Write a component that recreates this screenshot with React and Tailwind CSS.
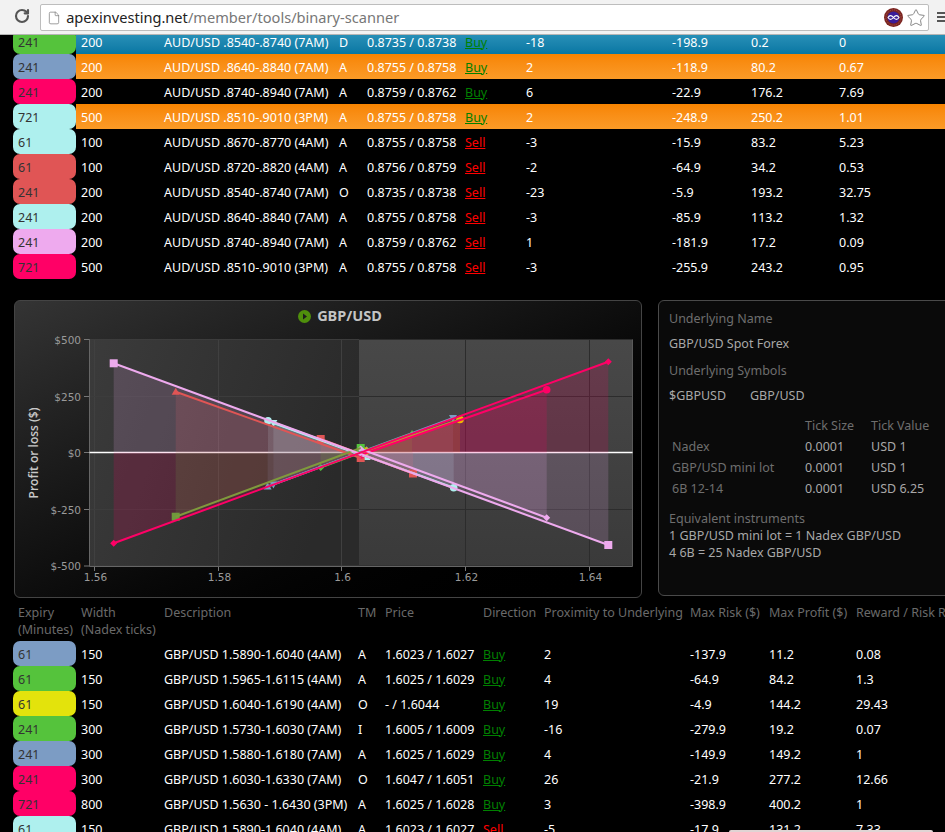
import React from 'react';
import { RotateCw, File, Star } from 'lucide-react';

const GREEN = 'bg-[#55c33c]';
const BLUE = 'bg-[#7c9cc4]';
const PINK = 'bg-[#ff0066]';
const CYAN = 'bg-[#aef0ee]';
const RED = 'bg-[#e05555]';
const LILAC = 'bg-[#eeaaee]';
const YELLOW = 'bg-[#e3e30c]';

const TOP_COLS = 'grid-cols-[83px_175px_28px_98px_61px_146px_79px_88px_1fr]';
const BOTTOM_COLS = 'grid-cols-[83px_194px_27px_98px_61px_146px_79px_87px_1fr]';

const topRows = [
    [GREEN, '241', '200', 'AUD/USD .8540-.8740 (7AM)', 'D', '0.8735 / 0.8738', 'Buy', '-18', '-198.9', '0.2', '0', 'blue'],
    [BLUE, '241', '200', 'AUD/USD .8640-.8840 (7AM)', 'A', '0.8755 / 0.8758', 'Buy', '2', '-118.9', '80.2', '0.67', 'orange'],
    [PINK, '241', '200', 'AUD/USD .8740-.8940 (7AM)', 'A', '0.8759 / 0.8762', 'Buy', '6', '-22.9', '176.2', '7.69', ''],
    [CYAN, '721', '500', 'AUD/USD .8510-.9010 (3PM)', 'A', '0.8755 / 0.8758', 'Buy', '2', '-248.9', '250.2', '1.01', 'orange'],
    [CYAN, '61', '100', 'AUD/USD .8670-.8770 (4AM)', 'A', '0.8755 / 0.8758', 'Sell', '-3', '-15.9', '83.2', '5.23', ''],
    [RED, '61', '100', 'AUD/USD .8720-.8820 (4AM)', 'A', '0.8756 / 0.8759', 'Sell', '-2', '-64.9', '34.2', '0.53', ''],
    [RED, '241', '200', 'AUD/USD .8540-.8740 (7AM)', 'O', '0.8735 / 0.8738', 'Sell', '-23', '-5.9', '193.2', '32.75', ''],
    [CYAN, '241', '200', 'AUD/USD .8640-.8840 (7AM)', 'A', '0.8755 / 0.8758', 'Sell', '-3', '-85.9', '113.2', '1.32', ''],
    [LILAC, '241', '200', 'AUD/USD .8740-.8940 (7AM)', 'A', '0.8759 / 0.8762', 'Sell', '1', '-181.9', '17.2', '0.09', ''],
    [PINK, '721', '500', 'AUD/USD .8510-.9010 (3PM)', 'A', '0.8755 / 0.8758', 'Sell', '-3', '-255.9', '243.2', '0.95', ''],
];

const bottomRows = [
    [BLUE, '61', '150', 'GBP/USD 1.5890-1.6040 (4AM)', 'A', '1.6023 / 1.6027', 'Buy', '2', '-137.9', '11.2', '0.08', ''],
    [GREEN, '61', '150', 'GBP/USD 1.5965-1.6115 (4AM)', 'A', '1.6025 / 1.6029', 'Buy', '4', '-64.9', '84.2', '1.3', ''],
    [YELLOW, '61', '150', 'GBP/USD 1.6040-1.6190 (4AM)', 'O', '- / 1.6044', 'Buy', '19', '-4.9', '144.2', '29.43', ''],
    [GREEN, '241', '300', 'GBP/USD 1.5730-1.6030 (7AM)', 'I', '1.6005 / 1.6009', 'Buy', '-16', '-279.9', '19.2', '0.07', ''],
    [BLUE, '241', '300', 'GBP/USD 1.5880-1.6180 (7AM)', 'A', '1.6025 / 1.6029', 'Buy', '4', '-149.9', '149.2', '1', ''],
    [PINK, '241', '300', 'GBP/USD 1.6030-1.6330 (7AM)', 'O', '1.6047 / 1.6051', 'Buy', '26', '-21.9', '277.2', '12.66', ''],
    [PINK, '721', '800', 'GBP/USD 1.5630 - 1.6430 (3PM)', 'A', '1.6025 / 1.6028', 'Buy', '3', '-398.9', '400.2', '1', ''],
    [CYAN, '61', '150', 'GBP/USD 1.5890-1.6040 (4AM)', 'A', '1.6023 / 1.6027', 'Sell', '-5', '-17.9', '131.2', '7.33', ''],
];

const rowBg = {
    blue: 'bg-gradient-to-b from-[#2f97bd] to-[#0677a3]',
    orange: 'bg-gradient-to-b from-[#f78400] to-[#fb9b26]',
    '': '',
};

function Row({ data, cols }) {
    const [badge, expiry, width, desc, tm, price, dir, prox, risk, profit, reward, tone] = data;
    return (
        <div className="flex h-[25px]">
            <div className="w-[76px] pl-[13px] shrink-0">
                <div className={`${badge} h-[25px] rounded-[7px] pl-[5px] pt-[3px] flex items-center text-[#333]`}>{expiry}</div>
            </div>
            <div className={`flex-1 pl-[5px] pt-[3px] grid ${cols} items-center text-white whitespace-nowrap ${rowBg[tone]}`}>
                <div>{width}</div>
                <div>{desc}</div>
                <div>{tm}</div>
                <div>{price}</div>
                <div>
                    <a className={`underline ${dir === 'Buy' ? 'text-[#008000]' : 'text-[#ff0000]'}`}>{dir}</a>
                </div>
                <div>{prox}</div>
                <div>{risk}</div>
                <div>{profit}</div>
                <div>{reward}</div>
            </div>
        </div>
    );
}

function BrowserBar() {
    return (
        <div className="relative z-10 h-[35px] bg-[#f2f2f2] border-b border-[#b5b5b5] flex items-start">
            <div className="w-[41px] h-[31px] flex items-center justify-center pl-[3px]">
                <RotateCw size={16} strokeWidth={3.2} className="text-[#555]" />
            </div>
            <div className="mt-[4px] w-[889px] h-[27px] bg-white border border-[#bdbdbd] rounded-[2px] flex items-center pl-[6px] shrink-0">
                <File size={14} strokeWidth={1.2} className="text-[#777]" />
                <div className="ml-[5px] text-[14.6px] whitespace-nowrap text-[#222]">
                    apexinvesting.net<span className="text-[#777]">/member/tools/binary-scanner</span>
                </div>
                <div className="ml-auto flex items-center pr-[2px]">
                    <svg width="19" height="19" viewBox="0 0 19 19">
                        <circle cx="9.5" cy="9.5" r="9.5" fill="#7a2420" />
                        <circle cx="9.5" cy="9.5" r="7.6" fill="none" stroke="#b0605a" strokeWidth="0.7" strokeDasharray="1 1" />
                        <circle cx="9.5" cy="9.5" r="6" fill="#3a1d9a" />
                        <path d="M4 9.5c1.500-2.500 3.500-2.500 5.500 0s4 2.500 5.500 0c-1.500-2.500-3.500-2.500-5.500 0s-4 2.500-5.500 0z" fill="none" stroke="#fff" strokeWidth="1.100" />
                    </svg>
                    <Star size={20} strokeWidth={1.2} className="text-[#888] ml-[3px]" />
                </div>
            </div>
            <div className="ml-[8px] mt-[12px] flex flex-col gap-[2px] w-[8px]">
                <div className="h-[2px] bg-[#555]" />
                <div className="h-[2px] bg-[#555]" />
                <div className="h-[2px] bg-[#555]" />
            </div>
        </div>
    );
}

// page coordinates are kept in the viewBox
const ZERO = 452.5;
// drawn in this order, the long 721 lines end up on top
const series = [
    { c: '#7c9cc4', a: [267.6, 486.5], b: [453, 418], m: ['triangle', 'tridown'] },
    { c: '#7c9cc4', a: [273.4, 484.5], b: [366.7, 450], m: ['tridown', 'triangle'] },
    { c: '#aef0ee', a: [273.4, 423], b: [366.7, 457], m: ['tridown', 'triangle'] },
    { c: '#aef0ee', a: [268, 420.7], b: [453.7, 487.7], m: ['circle', 'circle'] },
    { c: '#55c33c', a: [320.7, 467.5], b: [412, 433.7], m: ['diamond', 'triangle'] },
    { c: '#e05555', a: [320.7, 439], b: [413, 473.5], m: ['square', 'square'] },
    { c: '#f0b800', a: [366, 451], b: [460, 419.5], m: ['circle', 'circle'], line: '#b5a030' },
    { c: '#e05555', a: [175.7, 391.7], b: [360.7, 458], m: ['triangle', 'square'] },
    { c: '#55c33c', a: [175.7, 516.7], b: [360.7, 448], m: ['square', 'square'], line: '#7f9a3c', first: '#6f9a3c' },
    { c: '#ff0066', a: [360.7, 455], b: [546.7, 389.7], m: ['circle', 'circle'] },
    { c: '#eeaaee', a: [360.7, 449], b: [546.7, 517.7], m: ['diamond', 'diamond'] },
    { c: '#eeaaee', a: [113.7, 363.3], b: [608.3, 545], m: ['square', 'square'] },
    { c: '#ff0066', a: [113.7, 543.3], b: [608.3, 361.7], m: ['diamond', 'diamond'] },
];

function Marker({ kind, x, y, c }) {
    if (kind === 'square') return <rect x={x - 4} y={y - 4} width="8" height="8" fill={c} />;
    if (kind === 'circle') return <circle cx={x} cy={y} r="3.800" fill={c} />;
    if (kind === 'diamond') return <polygon points={`${x},${y - 3.500} ${x + 3.500},${y} ${x},${y + 3.500} ${x - 3.500},${y}`} fill={c} />;
    if (kind === 'triangle') return <polygon points={`${x},${y - 4} ${x + 4},${y + 3} ${x - 4},${y + 3}`} fill={c} />;
    return <polygon points={`${x - 4},${y - 3} ${x + 4},${y - 3} ${x},${y + 4}`} fill={c} />;
}

function Chart() {
    const xTicks = [[94.5, '1.56'], [218.5, '1.58'], [341.5, '1.6'], [465.5, '1.62'], [589.5, '1.64']];
    const yTicks = [[339.5, '$500'], [396.5, '$250'], [ZERO, '$0'], [509.5, '$-250'], [566, '$-500']];
    return (
        <svg width="626" height="266" viewBox="15 331 626 266" className="block font-['DejaVu_Sans',sans-serif]">
            <defs>
                <linearGradient id="plotLeft" x1="0" y1="0" x2="1" y2="0.300">
                    <stop offset="0" stopColor="#3b3b3b" />
                    <stop offset="1" stopColor="#2a2a2a" />
                </linearGradient>
                <linearGradient id="plotRight" x1="0" y1="0" x2="0" y2="1">
                    <stop offset="0" stopColor="#484848" />
                    <stop offset="1" stopColor="#3a3a3a" />
                </linearGradient>
            </defs>
            <rect x="89.500" y="339.500" width="270" height="226.500" fill="url(#plotLeft)" />
            <rect x="359" y="339.500" width="273.500" height="226.500" fill="url(#plotRight)" />
            {xTicks.map(([x]) => (
                <g key={x}>
                    <line x1={x} y1="339.500" x2={x} y2="566" stroke={x < 359 ? '#404040' : '#2c2c2c'} />
                    <line x1={x} y1="566" x2={x} y2="571" stroke="#777" />
                </g>
            ))}
            {yTicks.map(([y]) => (
                <g key={y}>
                    <line x1="89.500" y1={y} x2="359" y2={y} stroke="#3c3c3c" />
                    <line x1="359" y1={y} x2="632.500" y2={y} stroke="#2c2c2c" />
                    <line x1="84" y1={y} x2="89.500" y2={y} stroke="#777" />
                </g>
            ))}
            <line x1="89.500" y1="339" x2="89.500" y2="566.500" stroke="#666" />
            <line x1="89.500" y1="566.500" x2="632.500" y2="566.500" stroke="#666" />
            <line x1="632.500" y1="339.500" x2="632.500" y2="566.500" stroke="#5a5a5a" />
            <line x1="89.500" y1={ZERO} x2="632.500" y2={ZERO} stroke="#fff" strokeWidth="1.500" />
            {series.map((s, i) => (
                <polygon key={i} points={`${s.a[0]},${ZERO} ${s.a} ${s.b} ${s.b[0]},${ZERO}`} fill={s.c} fillOpacity="0.17" />
            ))}
            {series.map((s, i) => (
                <g key={i}>
                    <Marker kind={s.m[0]} x={s.a[0]} y={s.a[1]} c={s.first || s.c} />
                    <Marker kind={s.m[1]} x={s.b[0]} y={s.b[1]} c={s.c} />
                </g>
            ))}
            {series.map((s, i) => (
                <line key={i} x1={s.a[0]} y1={s.a[1]} x2={s.b[0]} y2={s.b[1]} stroke={s.line || s.c} strokeWidth="2" />
            ))}
            {yTicks.map(([y, t]) => (
                <text key={t} x="81" y={y + 4} textAnchor="end" fontSize="10.500" fill="#9a9a9a">{t}</text>
            ))}
            {xTicks.map(([x, t]) => (
                <text key={t} x={x + 1} y="581" textAnchor="middle" fontSize="10.500" fill="#9a9a9a">{t}</text>
            ))}
            <text transform="translate(37.500 453) rotate(-90)" textAnchor="middle" fontSize="12" fontWeight="600" fill="#c8c8c8" className="font-['Open_Sans',sans-serif]">Profit or loss ($)</text>
        </svg>
    );
}

function InfoPanel() {
    return (
        <div className="w-[300px] h-[296px] shrink-0 border border-[#4a4a4a] rounded-[6px] bg-[#0a0a0a] pl-[10px] pt-[9px] leading-[17px] whitespace-nowrap text-[#6e6e6e]">
            <div>Underlying Name</div>
            <div className="mt-[8px] text-[#a8a8a8]">GBP/USD Spot Forex</div>
            <div className="mt-[10px]">Underlying Symbols</div>
            <div className="mt-[8px] flex text-[#a8a8a8]">
                <div className="w-[81px]">$GBPUSD</div>
                <div>GBP/USD</div>
            </div>
            <div className="mt-[13px] grid grid-cols-[136px_66px_1fr]">
                <div />
                <div>Tick Size</div>
                <div>Tick Value</div>
            </div>
            <div className="mt-[2px] pl-[3px] grid grid-cols-[133px_66px_1fr] auto-rows-[21px] items-center">
                <div>Nadex</div>
                <div className="text-[#a8a8a8]">0.0001</div>
                <div className="text-[#a8a8a8]">USD 1</div>
                <div>GBP/USD mini lot</div>
                <div className="text-[#a8a8a8]">0.0001</div>
                <div className="text-[#a8a8a8]">USD 1</div>
                <div>6B 12-14</div>
                <div className="text-[#a8a8a8]">0.0001</div>
                <div className="text-[#a8a8a8]">USD 6.25</div>
            </div>
            <div className="mt-[11px]">Equivalent instruments</div>
            <div className="text-[#a8a8a8]">1 GBP/USD mini lot = 1 Nadex GBP/USD</div>
            <div className="text-[#a8a8a8]">4 6B = 25 Nadex GBP/USD</div>
        </div>
    );
}

export default function App() {
    return (
        <div className="relative w-[945px] h-[832px] overflow-hidden bg-black text-[12.5px] font-['Noto_Sans',sans-serif]">
            <BrowserBar />
            <div className="-mt-[6px]">
                {topRows.map((r, i) => <Row key={i} data={r} cols={TOP_COLS} />)}

                <div className="flex items-start gap-[16px] pl-[14px] mt-[21px]">
                    <div className="w-[628px] h-[298px] shrink-0 border border-[#444] rounded-[6px] bg-gradient-to-br from-[#343434] to-[#000]">
                        <div className="h-[30px] flex items-center justify-center pl-[24px]">
                            <svg width="13" height="13" viewBox="0 0 13 13" className="mr-[6px]">
                                <circle cx="6.500" cy="6.500" r="6.500" fill="#4f8f0c" />
                                <polygon points="5,3.500 9,6.500 5,9.500" fill="#1c1c1c" />
                            </svg>
                            <span className="text-[14.5px] font-bold text-[#c4c4c4]">GBP/USD</span>
                        </div>
                        <Chart />
                    </div>
                    <InfoPanel />
                </div>

                <div className="mt-[6px] h-[37px] flex text-[#6a6a6a] leading-[17px] whitespace-nowrap">
                    <div className="w-[76px] pl-[18px] shrink-0">Expiry<br />(Minutes)</div>
                    <div className={`flex-1 pl-[5px] grid ${BOTTOM_COLS} items-start`}>
                        <div>Width<br />(Nadex ticks)</div>
                        <div>Description</div>
                        <div>TM</div>
                        <div>Price</div>
                        <div>Direction</div>
                        <div>Proximity to Underlying</div>
                        <div>Max Risk ($)</div>
                        <div>Max Profit ($)</div>
                        <div>Reward / Risk Ratio</div>
                    </div>
                </div>
                {bottomRows.map((r, i) => <Row key={i} data={r} cols={BOTTOM_COLS} />)}
            </div>
            <div className="absolute left-[729px] top-[830px] w-[204px] h-[2px] bg-[#e0d4d4] rounded-t-[2px]" />
        </div>
    );
}
